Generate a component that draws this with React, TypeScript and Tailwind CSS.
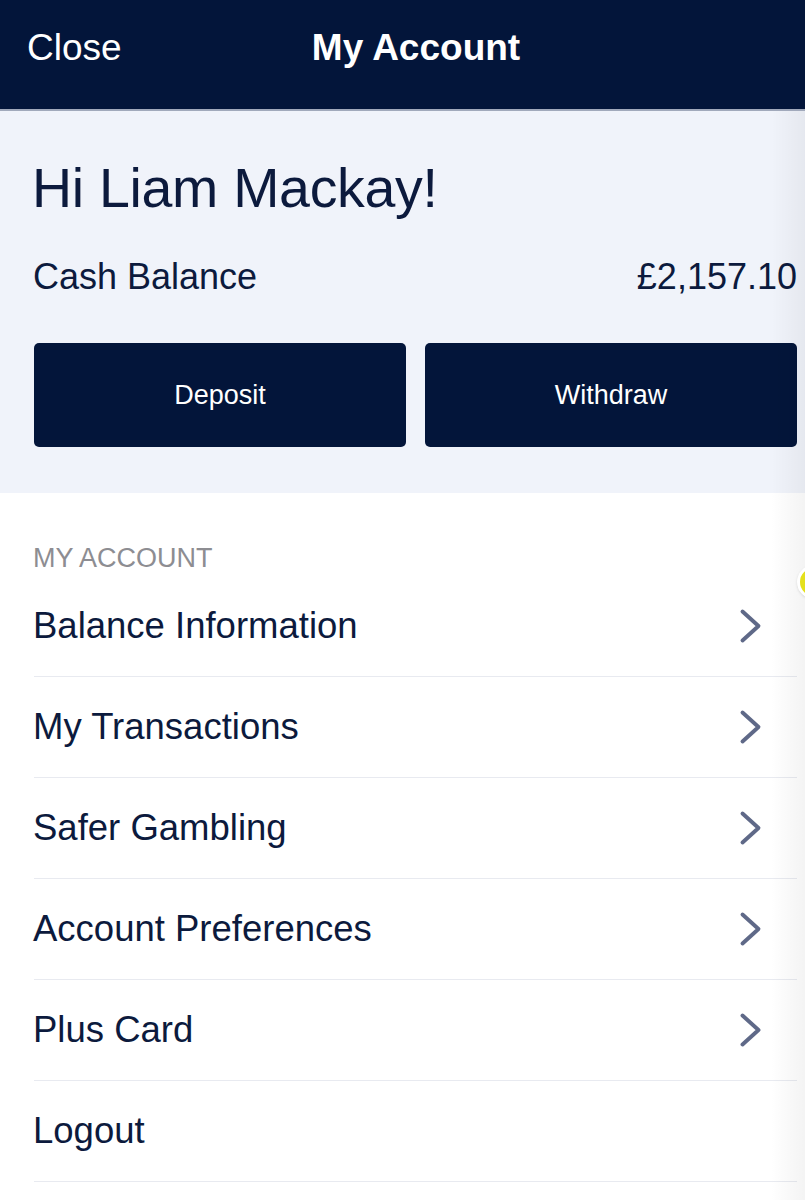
import React from "react";

const items = [
  { label: "Balance Information", chevron: true },
  { label: "My Transactions", chevron: true },
  { label: "Safer Gambling", chevron: true },
  { label: "Account Preferences", chevron: true },
  { label: "Plus Card", chevron: true },
  { label: "Logout", chevron: false },
];

function Chevron() {
  return (
    <svg width="24" height="36" viewBox="0 0 24 36" fill="none">
      <path
        d="M3.5 3.5 L19.5 18 L3.5 32.5"
        stroke="#5f6988"
        strokeWidth="3.9"
        strokeLinecap="round"
        strokeLinejoin="round"
      />
    </svg>
  );
}

export default function App() {
  return (
    <div
      className="relative w-[805px] h-[1200px] overflow-hidden bg-white text-[#0c1a3d]"
      style={{ fontFamily: '"Liberation Sans", Arial, Helvetica, sans-serif' }}
    >
      {/* Header */}
      <header className="h-[111px] bg-[#03153a] border-b-2 border-[#a1a9bb] grid grid-cols-[1fr_auto_1fr] items-center pl-[27px] pb-[14px] text-white">
        <div className="text-[37px] leading-[42px]">Close</div>
        <div className="text-[37px] leading-[42px] font-bold">My Account</div>
        <div />
      </header>

      {/* Greeting */}
      <section className="bg-[#f0f3fa] pl-[32px] pr-[8px] pt-[47px] pb-[46px]">
        <h1 className="text-[55.5px] leading-[60px] font-normal tracking-[-0.3px]">Hi Liam Mackay!</h1>
        <div className="mt-[39px] flex items-center justify-between text-[36px] leading-[40px]">
          <span className="ml-[1px]">Cash Balance</span>
          <span>£2,157.10</span>
        </div>
        <div className="mt-[46px] ml-[2px] grid grid-cols-2 gap-[19px]">
          <button className="h-[104px] rounded-[5px] bg-[#03153a] text-white text-[27px]">Deposit</button>
          <button className="h-[104px] rounded-[5px] bg-[#03153a] text-white text-[27px]">Withdraw</button>
        </div>
      </section>

      {/* List */}
      <section className="pt-[50px] pl-[34px] pr-[8px]">
        <div className="h-[30px] leading-[30px] text-[27px] text-[#8d8d92] -ml-[1px] mb-[3px]">MY ACCOUNT</div>
        <ul>
          {items.map((it) => (
            <li
              key={it.label}
              className="h-[101px] border-b border-[#e8eaf0] flex items-center justify-between"
            >
              <span className="text-[36.5px] leading-[40px] -ml-[1px]">{it.label}</span>
              {it.chevron && (
                <span className="mr-[34px] flex items-center">
                  <Chevron />
                </span>
              )}
            </li>
          ))}
        </ul>
      </section>

      {/* right edge shade */}
      <div className="pointer-events-none absolute right-0 top-[111px] bottom-0 w-[34px] bg-gradient-to-r from-transparent to-[#000000]/[0.045]" />

      {/* partial yellow circle at edge */}
      <div className="absolute left-[797px] top-[565px] w-[34px] h-[34px] rounded-full bg-[#e4e01c] border-[3px] border-white shadow" />
    </div>
  );
}
